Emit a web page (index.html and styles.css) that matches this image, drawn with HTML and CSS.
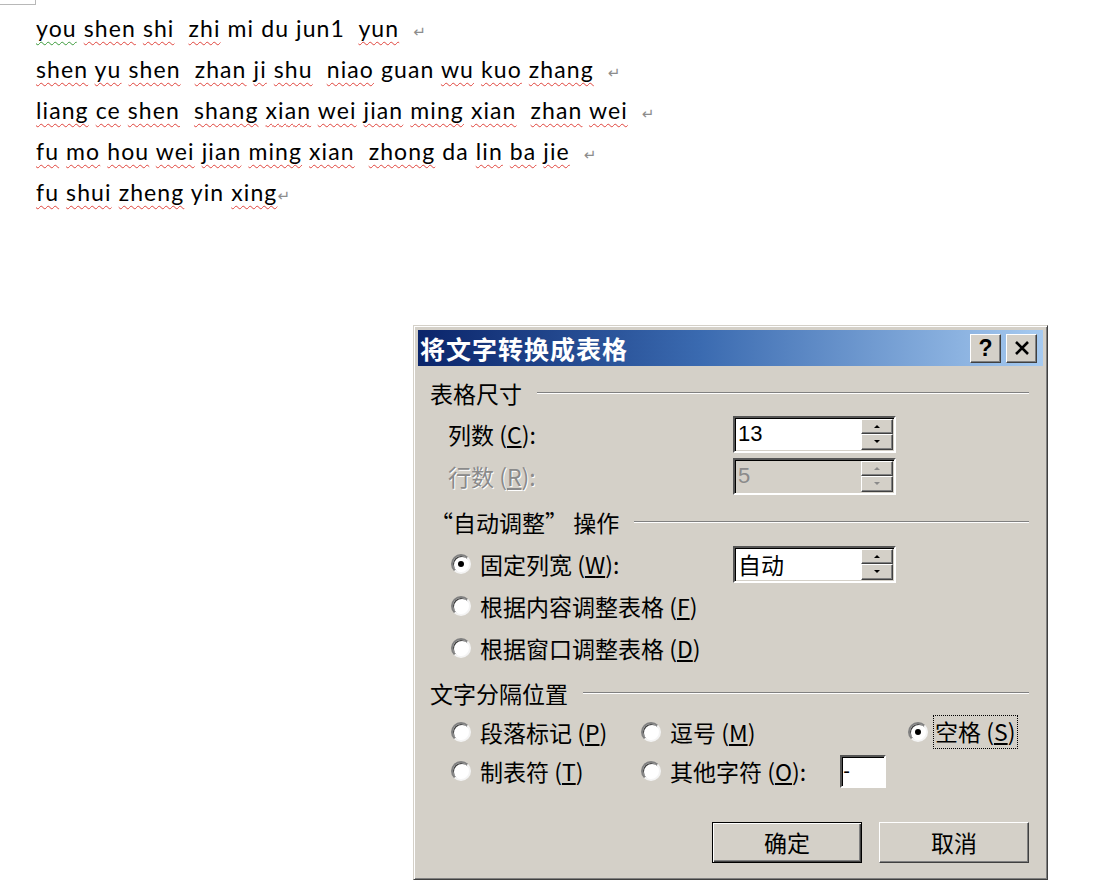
FILE: index.html
```html
<!DOCTYPE html>
<html lang="zh-CN">
<head>
<meta charset="utf-8">
<title>将文字转换成表格</title>
<link rel="stylesheet" href="styles.css">
</head>
<body>
<div class="corner"></div>
<div class="doc">
  <p class="line"><span class="sp g">you</span> <span class="sp">shen</span> <span class="sp">shi</span>  <span class="sp">zhi</span> mi du jun1  <span class="sp">yun</span>  <span class="pm">↵</span></p>
  <p class="line"><span class="sp">shen</span> <span class="sp">yu</span> <span class="sp">shen</span>  <span class="sp">zhan</span> <span class="sp">ji</span> <span class="sp">shu</span>  <span class="sp">niao</span> guan <span class="sp">wu</span> <span class="sp">kuo</span> <span class="sp">zhang</span>  <span class="pm">↵</span></p>
  <p class="line"><span class="sp">liang</span> <span class="sp">ce</span> <span class="sp">shen</span>  <span class="sp">shang</span> <span class="sp">xian</span> <span class="sp">wei</span> <span class="sp">jian</span> <span class="sp">ming</span> <span class="sp">xian</span>  <span class="sp">zhan</span> <span class="sp">wei</span>  <span class="pm">↵</span></p>
  <p class="line"><span class="sp">fu</span> <span class="sp">mo</span> <span class="sp">hou</span> <span class="sp">wei</span> <span class="sp">jian</span> <span class="sp">ming</span> <span class="sp">xian</span>  <span class="sp">zhong</span> da <span class="sp">lin</span> <span class="sp">ba</span> <span class="sp">jie</span>  <span class="pm">↵</span></p>
  <p class="line"><span class="sp">fu</span> <span class="sp">shui</span> <span class="sp">zheng</span> yin <span class="sp">xing</span><span class="pm">↵</span></p>
</div>

<div class="dialog">
  <div class="titlebar">
    <span class="title">将文字转换成表格</span>
    <div class="tbtns">
      <span class="tbtn help">?</span>
      <span class="tbtn close"><svg width="18" height="16" viewBox="0 0 18 16"><path d="M3 2 L15 14 M15 2 L3 14" stroke="#000" stroke-width="2.6" fill="none"/></svg></span>
    </div>
  </div>
  <div class="body">
    <div class="group-h h1"><span>表格尺寸</span><i class="rule"></i></div>
    <div class="row field">
      <span class="lab">列数 (<u>C</u>):</span>
      <div class="spin"><span class="val">13</span><span class="arrows"><span class="ar"><i class="up"></i></span><span class="ar"><i class="dn"></i></span></span></div>
    </div>
    <div class="row field disabled">
      <span class="lab">行数 (<u>R</u>):</span>
      <div class="spin off"><span class="val">5</span><span class="arrows"><span class="ar"><i class="up"></i></span><span class="ar"><i class="dn"></i></span></span></div>
    </div>

    <div class="group-h h2"><span>“自动调整” 操作</span><i class="rule"></i></div>
    <div class="row radio-row">
      <span class="radio on"></span>
      <span class="lab short">固定列宽 (<u>W</u>):</span>
      <div class="spin"><span class="val cjk">自动</span><span class="arrows"><span class="ar"><i class="up"></i></span><span class="ar"><i class="dn"></i></span></span></div>
    </div>
    <div class="row radio-row">
      <span class="radio"></span>
      <span class="lab">根据内容调整表格 (<u>F</u>)</span>
    </div>
    <div class="row radio-row">
      <span class="radio"></span>
      <span class="lab">根据窗口调整表格 (<u>D</u>)</span>
    </div>

    <div class="group-h h3"><span>文字分隔位置</span><i class="rule"></i></div>
    <div class="sep r1">
      <div class="opt"><span class="radio"></span><span>段落标记 (<u>P</u>)</span></div>
      <div class="opt"><span class="radio"></span><span>逗号 (<u>M</u>)</span></div>
      <div class="opt"><span class="radio on"></span><span class="focus">空格 (<u>S</u>)</span></div>
    </div>
    <div class="sep r2">
      <div class="opt"><span class="radio"></span><span>制表符 (<u>T</u>)</span></div>
      <div class="opt"><span class="radio"></span><span>其他字符 (<u>O</u>):</span><span class="other">-</span></div>
    </div>

    <div class="buttons">
      <span class="btn default">确定</span>
      <span class="btn">取消</span>
    </div>
  </div>
</div>
</body>
</html>
```

FILE: styles.css
```css
* { box-sizing: border-box; }
html, body { margin: 0; padding: 0; background: #ffffff; }
body {
  width: 1094px;
  height: 896px;
  overflow: hidden;
  font-family: "Noto Sans CJK SC", "Noto Sans", sans-serif;
}

.corner {
  width: 36px;
  height: 5px;
  border-right: 1px solid #b8b8b8;
  border-bottom: 1px solid #b8b8b8;
}

.doc {
  padding: 3px 0 0 36px;
  font-family: Lato, "Open Sans", sans-serif;
  font-size: 23px;
  letter-spacing: 1.1px;
  color: #000000;
}
.line {
  margin: 0;
  height: 41px;
  line-height: 41px;
  white-space: pre;
}
.sp {
  text-decoration-line: underline;
  text-decoration-style: wavy;
  text-decoration-color: #e0443c;
  text-decoration-thickness: 1px;
  text-underline-offset: 4px;
  text-decoration-skip-ink: none;
}
.sp.g { text-decoration-color: #3a9a3a; }
.pm {
  color: #8c8c8c;
  font-family: "DejaVu Sans", sans-serif;
  font-size: 15px;
  letter-spacing: 0;
}

/* dialog */
.dialog {
  margin: 112px 0 0 413px;
  width: 635px;
  height: 555px;
  background: #d4d0c8;
  border: 1px solid;
  border-color: #d4d0c8 #404040 #404040 #d4d0c8;
  box-shadow: inset 1px 1px #ffffff, inset -1px -1px #808080;
  padding: 4px;
  display: flex;
  flex-direction: column;
}
.titlebar {
  height: 36px;
  flex: none;
  display: flex;
  align-items: center;
  justify-content: space-between;
  padding: 0 6px 0 2px;
  background: linear-gradient(to right, #0a246a 0%, #3a6ab0 45%, #a6caf0 100%);
}
.title {
  color: #ffffff;
  font-weight: 700;
  font-size: 25px;
  line-height: 1;
  letter-spacing: 1px;
}
.tbtns { display: flex; gap: 5px; }
.tbtn {
  width: 31px;
  height: 29px;
  display: flex;
  align-items: center;
  justify-content: center;
  background: #d4d0c8;
  border: 1px solid;
  border-color: #ffffff #404040 #404040 #ffffff;
  box-shadow: inset -1px -1px #808080;
}
.tbtn.help {
  font-family: "Liberation Sans", Arial, sans-serif;
  font-weight: 700;
  font-size: 23px;
  color: #000;
  line-height: 1;
}

.body {
  flex: 1;
  padding: 7px 14px 0 12px;
  font-size: 23px;
  color: #000;
  line-height: 1;
}
.group-h {
  display: flex;
  align-items: center;
  gap: 15px;
}
.group-h.h1 { height: 40px; }
.group-h.h2 { height: 46px; padding-top: 4px; }
.group-h.h3 { height: 44px; padding-top: 4px; }
.group-h .rule {
  flex: 1;
  height: 2px;
  border-top: 1px solid #808080;
  border-bottom: 1px solid #ffffff;
}

.row {
  height: 42px;
  display: flex;
  align-items: center;
}
.row.field { padding-left: 18px; }
.row.field .lab { width: 285px; }
.row.disabled .lab { color: #8a8a8a; text-shadow: 1px 1px 0 #ffffff; }
.row.radio-row { padding-left: 21px; }
.row.radio-row .radio { margin-right: 9px; }
.row.radio-row .lab.short { width: 253px; }

.spin {
  width: 163px;
  height: 37px;
  display: flex;
  background: #ffffff;
  border: 2px solid;
  border-color: #555555 #ffffff #ffffff #555555;
  box-shadow: inset 1px 1px #000000, inset -1px -1px #d4d0c8;
  padding: 1px 1px 1px 2px;
}
.spin.off { background: #d4d0c8; }
.spin .val {
  flex: 1;
  display: flex;
  align-items: center;
  padding-left: 1px;
  font-family: "Liberation Sans", Arial, sans-serif;
  font-size: 22px;
  color: #000;
}
.spin .val.cjk { font-family: "Noto Sans CJK SC", sans-serif; font-size: 23px; }
.spin.off .val { color: #8a8a8a; }
.arrows {
  width: 32px;
  display: flex;
  flex-direction: column;
}
.ar {
  flex: 1;
  display: flex;
  align-items: center;
  justify-content: center;
  background: #d4d0c8;
  border: 1px solid;
  border-color: #ffffff #404040 #404040 #ffffff;
  box-shadow: inset -1px -1px #808080;
}
.ar i { width: 0; height: 0; border-left: 3px solid transparent; border-right: 3px solid transparent; }
.ar i.up { border-bottom: 3px solid #000; }
.ar i.dn { border-top: 3px solid #000; }
.spin.off .ar i.up { border-bottom-color: #8a8a8a; }
.spin.off .ar i.dn { border-top-color: #8a8a8a; }

.radio {
  flex: none;
  position: relative;
  width: 20px;
  height: 20px;
  border-radius: 50%;
  background: #ffffff;
  border: 2px solid;
  border-color: #808080 #f4f4f4 #f4f4f4 #808080;
  box-shadow: inset 1px 1px #404040;
}
.radio.on::after {
  content: "";
  position: absolute;
  left: 5px;
  top: 5px;
  width: 6px;
  height: 6px;
  border-radius: 50%;
  background: #000;
}

.sep {
  display: grid;
  grid-template-columns: 190px 267px auto;
  padding-left: 21px;
}
.sep.r1 { height: 38px; }
.sep.r2 { height: 40px; }
.opt { display: flex; align-items: center; }
.opt .radio { margin-right: 9px; }
.focus {
  outline: 1px dotted #000;
  padding: 4px 2px 5px 1px;
  margin-left: -3px;
}
.other {
  margin-left: 34px;
  width: 46px;
  height: 33px;
  background: #ffffff;
  border: 2px solid;
  border-color: #555555 #ffffff #ffffff #555555;
  box-shadow: inset 1px 1px #000000;
  font-family: "Liberation Sans", Arial, sans-serif;
  font-size: 20px;
  display: flex;
  align-items: center;
  padding-left: 1px;
}

.buttons {
  margin-top: 31px;
  display: flex;
  justify-content: flex-end;
  gap: 17px;
}
.btn {
  width: 150px;
  height: 41px;
  display: flex;
  align-items: center;
  justify-content: center;
  font-size: 23px;
  background: #d4d0c8;
  border: 1px solid;
  border-color: #ffffff #404040 #404040 #ffffff;
  box-shadow: inset -1px -1px #808080;
}
.btn.default {
  border: 1px solid #000;
  box-shadow: inset 1px 1px #ffffff, inset -1px -1px #404040, inset -2px -2px #808080;
}
```
